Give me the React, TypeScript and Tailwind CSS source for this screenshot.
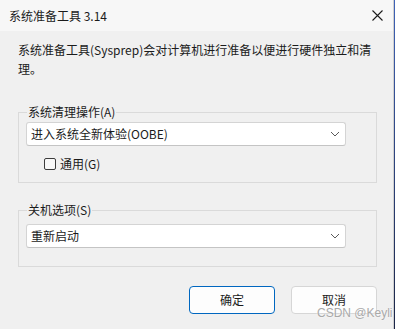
import React from "react";

const font = { fontFamily: '"Noto Sans CJK SC", "Noto Sans", sans-serif' };

function Chevron() {
  return (
    <svg width="10" height="6" viewBox="0 0 10 6" className="shrink-0">
      <path d="M1 1 L5 5 L9 1" fill="none" stroke="#5a5a5a" strokeWidth="1" />
    </svg>
  );
}

function Select({ value }: { value: string }) {
  return (
    <div className="flex h-[24px] w-[320px] items-center justify-between rounded-[3px] border border-[#d4d4d4] border-b-[#c4c4c4] bg-white pl-[4px] pr-[5px]">
      <span className="text-[12px] leading-[16px] text-[#1b1b1b]">{value}</span>
      <Chevron />
    </div>
  );
}

function Group({ label, children, className }: { label: string; children: React.ReactNode; className: string }) {
  return (
    <div className={"relative w-[359px] border border-[#dadada] pl-[7px] " + className}>
      <span className="absolute left-[8px] top-[-9px] bg-[#f0f0f0] px-[1px] text-[12px] leading-[16px] text-[#1b1b1b]">
        {label}
      </span>
      {children}
    </div>
  );
}

export default function App() {
  return (
    <div className="flex h-[329px] w-[395px] bg-[#f0f0f0]" style={font}>
      <div className="relative flex h-[329px] w-[394px] flex-col border-r border-[#cfcfcf] bg-[#f0f0f0]">
        <div className="flex h-[31px] items-center justify-between bg-[#f7f7f7] pl-[9px] pr-[10px]">
          <span className="text-[12px] leading-[16px] text-[#1b1b1b]">系统准备工具 3.14</span>
          <svg width="11" height="11" viewBox="0 0 11 11">
            <path d="M0.5 0.5 L10.5 10.5 M10.5 0.5 L0.5 10.5" stroke="#1b1b1b" strokeWidth="1.1" />
          </svg>
        </div>
        <div className="flex flex-col px-[18px] pt-[9px]">
          <p className="text-[12px] leading-[19px] text-[#1b1b1b]">
            系统准备工具(Sysprep)会对计算机进行准备以便进行硬件独立和清
            <br />
            理。
          </p>
          <Group label="系统清理操作(A)" className="mt-[34px] h-[71px] pt-[9px]">
            <Select value="进入系统全新体验(OOBE)" />
            <div className="mt-[10px] ml-[18px] flex items-center gap-[4px]">
              <div className="h-[12px] w-[12px] rounded-[2px] border border-[#3c3c3c] bg-[#f8f8f8]" />
              <span className="text-[12px] leading-[16px] text-[#1b1b1b]">通用(G)</span>
            </div>
          </Group>
          <Group label="关机选项(S)" className="mt-[27px] h-[57px] pt-[13px]">
            <Select value="重新启动" />
          </Group>
          <div className="mt-[19px] flex w-[359px] justify-end gap-[16px]">
            <button className="flex h-[28px] w-[86px] items-center justify-center rounded-[4px] border border-[#0067c0] bg-[#fdfdfd] text-[12px] leading-[14px] text-[#1b1b1b]">
              确定
            </button>
            <button className="flex h-[28px] w-[86px] items-center justify-center rounded-[4px] border border-[#d6d6d6] bg-[#fdfdfd] text-[12px] leading-[14px] text-[#1b1b1b]">
              取消
            </button>
          </div>
        </div>
        <span
          className="absolute left-[317px] top-[307px] text-[12px] leading-[12px] text-[#a9a9a9]"
          style={{ fontFamily: '"Liberation Sans", Arial, sans-serif', textShadow: "0 0 2px #ffffff" }}
        >
          CSDN @Keyli
        </span>
      </div>
      <div className="h-[329px] w-[1px] bg-gradient-to-b from-[#3f63b8] to-[#1b2546]" />
    </div>
  );
}
